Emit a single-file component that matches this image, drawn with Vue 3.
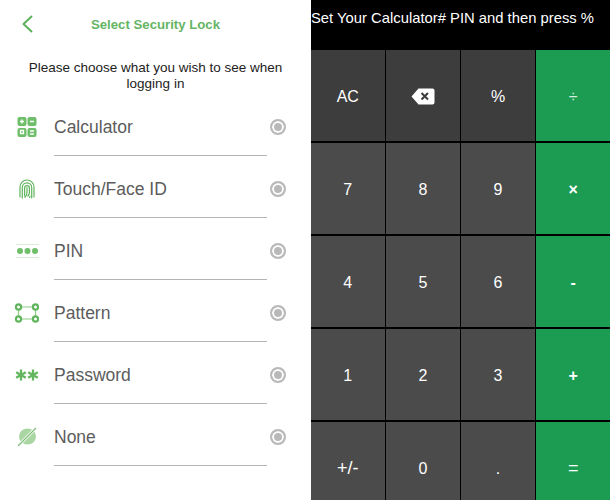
<template>
  <div class="screen">
    <section class="lock">
      <header class="lock-head">
        <svg class="back" width="12" height="18" viewBox="0 0 12 18">
          <path d="M10.5 1.5 L2.5 9 L10.5 16.5" fill="none" stroke="#5cb25c" stroke-width="2" stroke-linecap="round" stroke-linejoin="round" />
        </svg>
        <h1>Select Security Lock</h1>
      </header>
      <p class="hint">Please choose what you wish to see when logging in</p>
      <ul>
        <li v-for="opt in options" :key="opt.name">
          <span class="ico">
            <svg v-if="opt.icon === 'calc'" width="20" height="20" viewBox="0 0 20 20">
              <rect x="0.5" y="0" width="9" height="9" rx="2" fill="#6fbe6a" />
              <rect x="10.5" y="0" width="9" height="9" rx="2" fill="#6fbe6a" />
              <rect x="0.5" y="11" width="9" height="9" rx="2" fill="#6fbe6a" />
              <rect x="10.5" y="11" width="9" height="9" rx="2" fill="#6fbe6a" />
              <path d="M3 4.5h4M5 2.5v4M13 4.5h4M3.5 13.5v3h3v-3zM13 14h4M13 17h4" stroke="#fff" stroke-width="1.3" fill="none" />
            </svg>
            <svg v-else-if="opt.icon === 'finger'" width="16" height="20" viewBox="0 0 16 20" fill="none" stroke="#5fb45c" stroke-width="1.2" stroke-linecap="round">
              <path d="M1 18V8a7 7 0 0 1 14 0v10" />
              <path d="M3.3 19V8.5a4.700 4.700 0 0 1 9.400 0V19" />
              <path d="M5.6 17V9a2.400 2.400 0 0 1 4.800 0v4.500c0 1.500-.6 2.500-1.500 3.500" />
              <path d="M8 8.5v5c0 1.500-.7 3-2 5" />
              <path d="M10.5 18.5l.6-1" />
            </svg>
            <svg v-else-if="opt.icon === 'pin'" width="23" height="16" viewBox="0 0 23 16">
              <path d="M0 1.5h23M0 14.5h23" stroke="#d7edd5" stroke-width="1" />
              <circle cx="4" cy="8" r="3" fill="#6fbe6a" />
              <circle cx="11.5" cy="8" r="3" fill="#6fbe6a" />
              <circle cx="19" cy="8" r="3" fill="#6fbe6a" />
            </svg>
            <svg v-else-if="opt.icon === 'pattern'" width="24" height="20" viewBox="0 0 24 20" fill="none">
              <path d="M6 4h12M6 16h12M3.5 6v8M20.500 6v8" stroke="#8ccb88" stroke-width="1.200" />
              <circle cx="3.5" cy="4" r="2.600" stroke="#5fb45c" stroke-width="2.200" />
              <circle cx="20.5" cy="4" r="2.600" stroke="#5fb45c" stroke-width="2.200" />
              <circle cx="3.5" cy="16" r="2.600" stroke="#5fb45c" stroke-width="2.200" />
              <circle cx="20.5" cy="16" r="2.600" stroke="#5fb45c" stroke-width="2.200" />
            </svg>
            <svg v-else-if="opt.icon === 'stars'" width="24" height="12" viewBox="0 0 24 12" stroke="#62b65e" stroke-width="2.300">
              <path d="M6 0.5v11M1.200 3.200l9.600 5.600M10.800 3.200l-9.600 5.600" />
              <path d="M18 0.5v11M13.200 3.200l9.600 5.600M22.800 3.200l-9.600 5.600" />
            </svg>
            <svg v-else width="20" height="20" viewBox="0 0 20 20">
              <ellipse cx="10.5" cy="9.5" rx="8.500" ry="8" fill="#a9d6a3" />
              <path d="M1 19 L19 1" stroke="#fff" stroke-width="3" />
              <path d="M1 19 L19 1" stroke="#7fbf7a" stroke-width="1.200" />
            </svg>
          </span>
          <span class="name">{{ opt.name }}</span>
          <span class="radio"></span>
        </li>
      </ul>
    </section>
    <section class="calc">
      <div class="prompt">Set Your Calculator# PIN and then press %</div>
      <div class="keys">
        <button v-for="k in keys" :key="k.label" :class="['key', k.kind]">
          <svg v-if="k.label === 'del'" width="24" height="17" viewBox="0 0 24 17">
            <path d="M7.5 0.5H21.5a2 2 0 0 1 2 2V14.5a2 2 0 0 1-2 2H7.5L0.5 8.5Z" fill="#fff" />
            <path d="M10.5 5l6.500 6.500M17 5l-6.500 6.500" stroke="#3d3d3d" stroke-width="2" />
          </svg>
          <template v-else>{{ k.label }}</template>
        </button>
      </div>
    </section>
  </div>
</template>

<script setup>
const options = [
  { name: 'Calculator', icon: 'calc' },
  { name: 'Touch/Face ID', icon: 'finger' },
  { name: 'PIN', icon: 'pin' },
  { name: 'Pattern', icon: 'pattern' },
  { name: 'Password', icon: 'stars' },
  { name: 'None', icon: 'none' }
]

const keys = [
  { label: 'AC', kind: 'top' },
  { label: 'del', kind: 'top' },
  { label: '%', kind: 'top' },
  { label: '÷', kind: 'op thin' },
  { label: '7', kind: '' },
  { label: '8', kind: '' },
  { label: '9', kind: '' },
  { label: '×', kind: 'op' },
  { label: '4', kind: '' },
  { label: '5', kind: '' },
  { label: '6', kind: '' },
  { label: '-', kind: 'op' },
  { label: '1', kind: '' },
  { label: '2', kind: '' },
  { label: '3', kind: '' },
  { label: '+', kind: 'op' },
  { label: '+/-', kind: 'wide' },
  { label: '0', kind: '' },
  { label: '.', kind: '' },
  { label: '=', kind: 'op big' }
]
</script>

<style scoped>
.screen {
  display: flex;
  width: 610px;
  height: 500px;
  overflow: hidden;
  font-family: "Liberation Sans", Arial, sans-serif;
  background: #fff;
}

.lock {
  width: 311px;
  flex: none;
}

.lock-head {
  position: relative;
  height: 48px;
  display: flex;
  align-items: center;
  justify-content: center;
}

.back {
  position: absolute;
  left: 21px;
  top: 15px;
}

h1 {
  margin: 0;
  font-size: 13.2px;
  font-weight: 700;
  color: #65b565;
}

.hint {
  margin: 12px 24px 0;
  font-size: 13.5px;
  line-height: 16px;
  text-align: center;
  color: #222;
}

ul {
  list-style: none;
  margin: 2px 0 0;
  padding: 0;
}

li {
  position: relative;
  height: 62px;
  display: flex;
  align-items: center;
  padding-left: 54px;
  padding-top: 6px;
  padding-bottom: 2px;
  box-sizing: border-box;
}

li::after {
  content: "";
  position: absolute;
  left: 54px;
  bottom: 0;
  width: 213px;
  height: 1px;
  background: #b5b5b5;
}

.ico {
  position: absolute;
  left: 15px;
  width: 24px;
  top: 21px;
  height: 24px;
  display: flex;
  align-items: center;
  justify-content: center;
}

.name {
  font-size: 17.5px;
  color: #5c5c5c;
}

.radio {
  position: absolute;
  left: 270px;
  top: 25px;
  width: 16px;
  height: 16px;
  box-sizing: border-box;
  border: 2px solid #b9b9b9;
  border-radius: 50%;
  background: #b9b9b9;
  box-shadow: inset 0 0 0 2px #fff;
}

.calc {
  flex: 1;
  background: #000;
  display: flex;
  flex-direction: column;
}

.prompt {
  height: 50px;
  flex: none;
  box-sizing: border-box;
  padding-top: 9px;
  font-size: 14.8px;
  line-height: 18px;
  color: #fff;
  white-space: nowrap;
}

.keys {
  display: grid;
  grid-template-columns: repeat(4, 1fr);
  grid-auto-rows: 91px;
  gap: 2px 1.5px;
}

.key {
  border: 0;
  padding: 2px 0 0;
  margin: 0;
  display: flex;
  align-items: center;
  justify-content: center;
  background: #4b4b4b;
  color: #fff;
  font-family: inherit;
  font-size: 16px;
}

.key.top {
  background: #3d3d3d;
}

.key.wide {
  font-size: 18px;
}

.key.op {
  background: #1c9c53;
  font-size: 16px;
  font-weight: 700;
}

.key.op.thin {
  font-weight: 400;
  color: #d5efdf;
}

.key.op.big {
  font-size: 18px;
  font-weight: 400;
}
</style>
